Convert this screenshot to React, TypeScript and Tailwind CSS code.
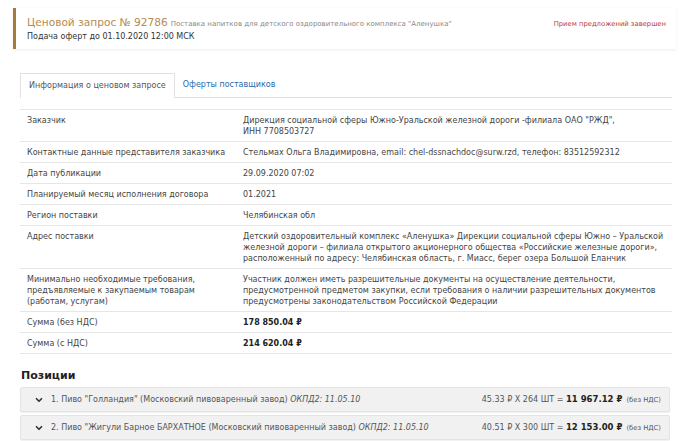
import { ChevronDown } from 'lucide-react';

const rows: { label: string; value: React.ReactNode }[] = [
  {
    label: 'Заказчик',
    value: (
      <>
        Дирекция социальной сферы Южно-Уральской железной дороги -филиала ОАО "РЖД",
        <br />
        ИНН 7708503727
      </>
    ),
  },
  {
    label: 'Контактные данные представителя заказчика',
    value: 'Стельмах Ольга Владимировна, email: chel-dssnachdoc@surw.rzd, телефон: 83512592312',
  },
  { label: 'Дата публикации', value: '29.09.2020 07:02' },
  { label: 'Планируемый месяц исполнения договора', value: '01.2021' },
  { label: 'Регион поставки', value: 'Челябинская обл' },
  {
    label: 'Адрес поставки',
    value:
      'Детский оздоровительный комплекс «Аленушка» Дирекции социальной сферы Южно – Уральской железной дороги – филиала открытого акционерного общества «Российские железные дороги», расположенный по адресу: Челябинская область, г. Миасс, берег озера Большой Еланчик',
  },
  {
    label: 'Минимально необходимые требования, предъявляемые к закупаемым товарам (работам, услугам)',
    value:
      'Участник должен иметь разрешительные документы на осуществление деятельности, предусмотренной предметом закупки, если требования о наличии разрешительных документов предусмотрены законодательством Российской Федерации',
  },
  { label: 'Сумма (без НДС)', value: <b className="font-bold text-[#222]">178 850.04 ₽</b> },
  { label: 'Сумма (с НДС)', value: <b className="font-bold text-[#222]">214 620.04 ₽</b> },
];

const positions = [
  {
    name: '1. Пиво "Голландия" (Московский пивоваренный завод)',
    okpd: '11.05.10',
    price: '45.33 ₽ X 264 ШТ = ',
    total: '11 967.12 ₽',
  },
  {
    name: '2. Пиво "Жигули Барное БАРХАТНОЕ (Московский пивоваренный завод)',
    okpd: '11.05.10',
    price: '40.51 ₽ X 300 ШТ = ',
    total: '12 153.00 ₽',
  },
];

export default function App() {
  return (
    <div className="w-[680px] h-[441px] overflow-hidden bg-white font-['DejaVu_Sans',sans-serif] text-[8px] text-[#444]">
      {/* Header card */}
      <div className="pt-2 pl-[13px] pr-[4px]">
        <div className="flex justify-between border-l-[3px] border-[#a67a3a] shadow-[0_1px_3px_rgba(0,0,0,0.08)] h-[41px] pl-[11px] pr-[10px] pt-[8px]">
          <div>
            <div className="flex items-baseline gap-[3px]">
              <span className="text-[10.6px] text-[#b78a4f] leading-[13px]">Ценовой запрос № 92786</span>
              <span className="text-[7px] text-[#888]">Поставка напитков для детского оздоровительного комплекса "Аленушка"</span>
            </div>
            <div className="text-[8px] text-[#333] leading-[11px] mt-[1px]">Подача оферт до 01.10.2020 12:00 МСК</div>
          </div>
          <div className="text-[6.8px] text-[#c0392b] pt-[3px]">Прием предложений завершен</div>
        </div>
      </div>

      {/* Tabs */}
      <div className="mt-[24px] ml-[20px] mr-[8px]">
        <div className="flex border-b border-[#e2e2e2]">
          <div className="border border-b-0 border-[#e2e2e2] bg-white -mb-px h-[25px] px-[8px] flex items-center text-[#555]">
            Информация о ценовом запросе
          </div>
          <div className="h-[24px] px-[8px] flex items-center text-[#2d6aa8]">Оферты поставщиков</div>
        </div>

        {/* Table */}
        <div className="mt-[11px] border-b border-[#e6e6e6]">
          {rows.map((r) => (
            <div key={r.label} className="flex border-t border-[#e6e6e6] pt-[5px] pb-[4px] leading-[11px]">
              <div className="w-[223px] shrink-0 pl-[7px] pr-[8px] text-[#444]">{r.label}</div>
              <div className="flex-1 pr-[6px] text-[#444]">{r.value}</div>
            </div>
          ))}
        </div>
      </div>

      {/* Positions */}
      <div className="ml-[20px] mr-[10px] mt-[15px]">
        <div className="text-[11px] font-bold text-[#222] leading-[13px] mb-[5px] pl-px">Позиции</div>
        <div className="flex flex-col gap-[3px]">
          {positions.map((p) => (
            <div
              key={p.name}
              className="flex items-center justify-between h-[25px] bg-[#f1f1f1] border border-[#e4e4e4] rounded-[2px] shadow-[0_1px_1px_rgba(0,0,0,0.06)] pl-[13px] pr-[8px]"
            >
              <div className="flex items-center">
                <ChevronDown size={10} strokeWidth={4} className="text-[#333] mr-[7px]" />
                <span className="text-[#555]">
                  {p.name} <i className="italic">ОКПД2: {p.okpd}</i>
                </span>
              </div>
              <div className="text-[#555]">
                {p.price}
                <b className="font-bold text-[#222] text-[8.5px]">{p.total}</b>
                <span className="text-[6.8px] ml-[4px]">(без НДС)</span>
              </div>
            </div>
          ))}
        </div>
      </div>
    </div>
  );
}
